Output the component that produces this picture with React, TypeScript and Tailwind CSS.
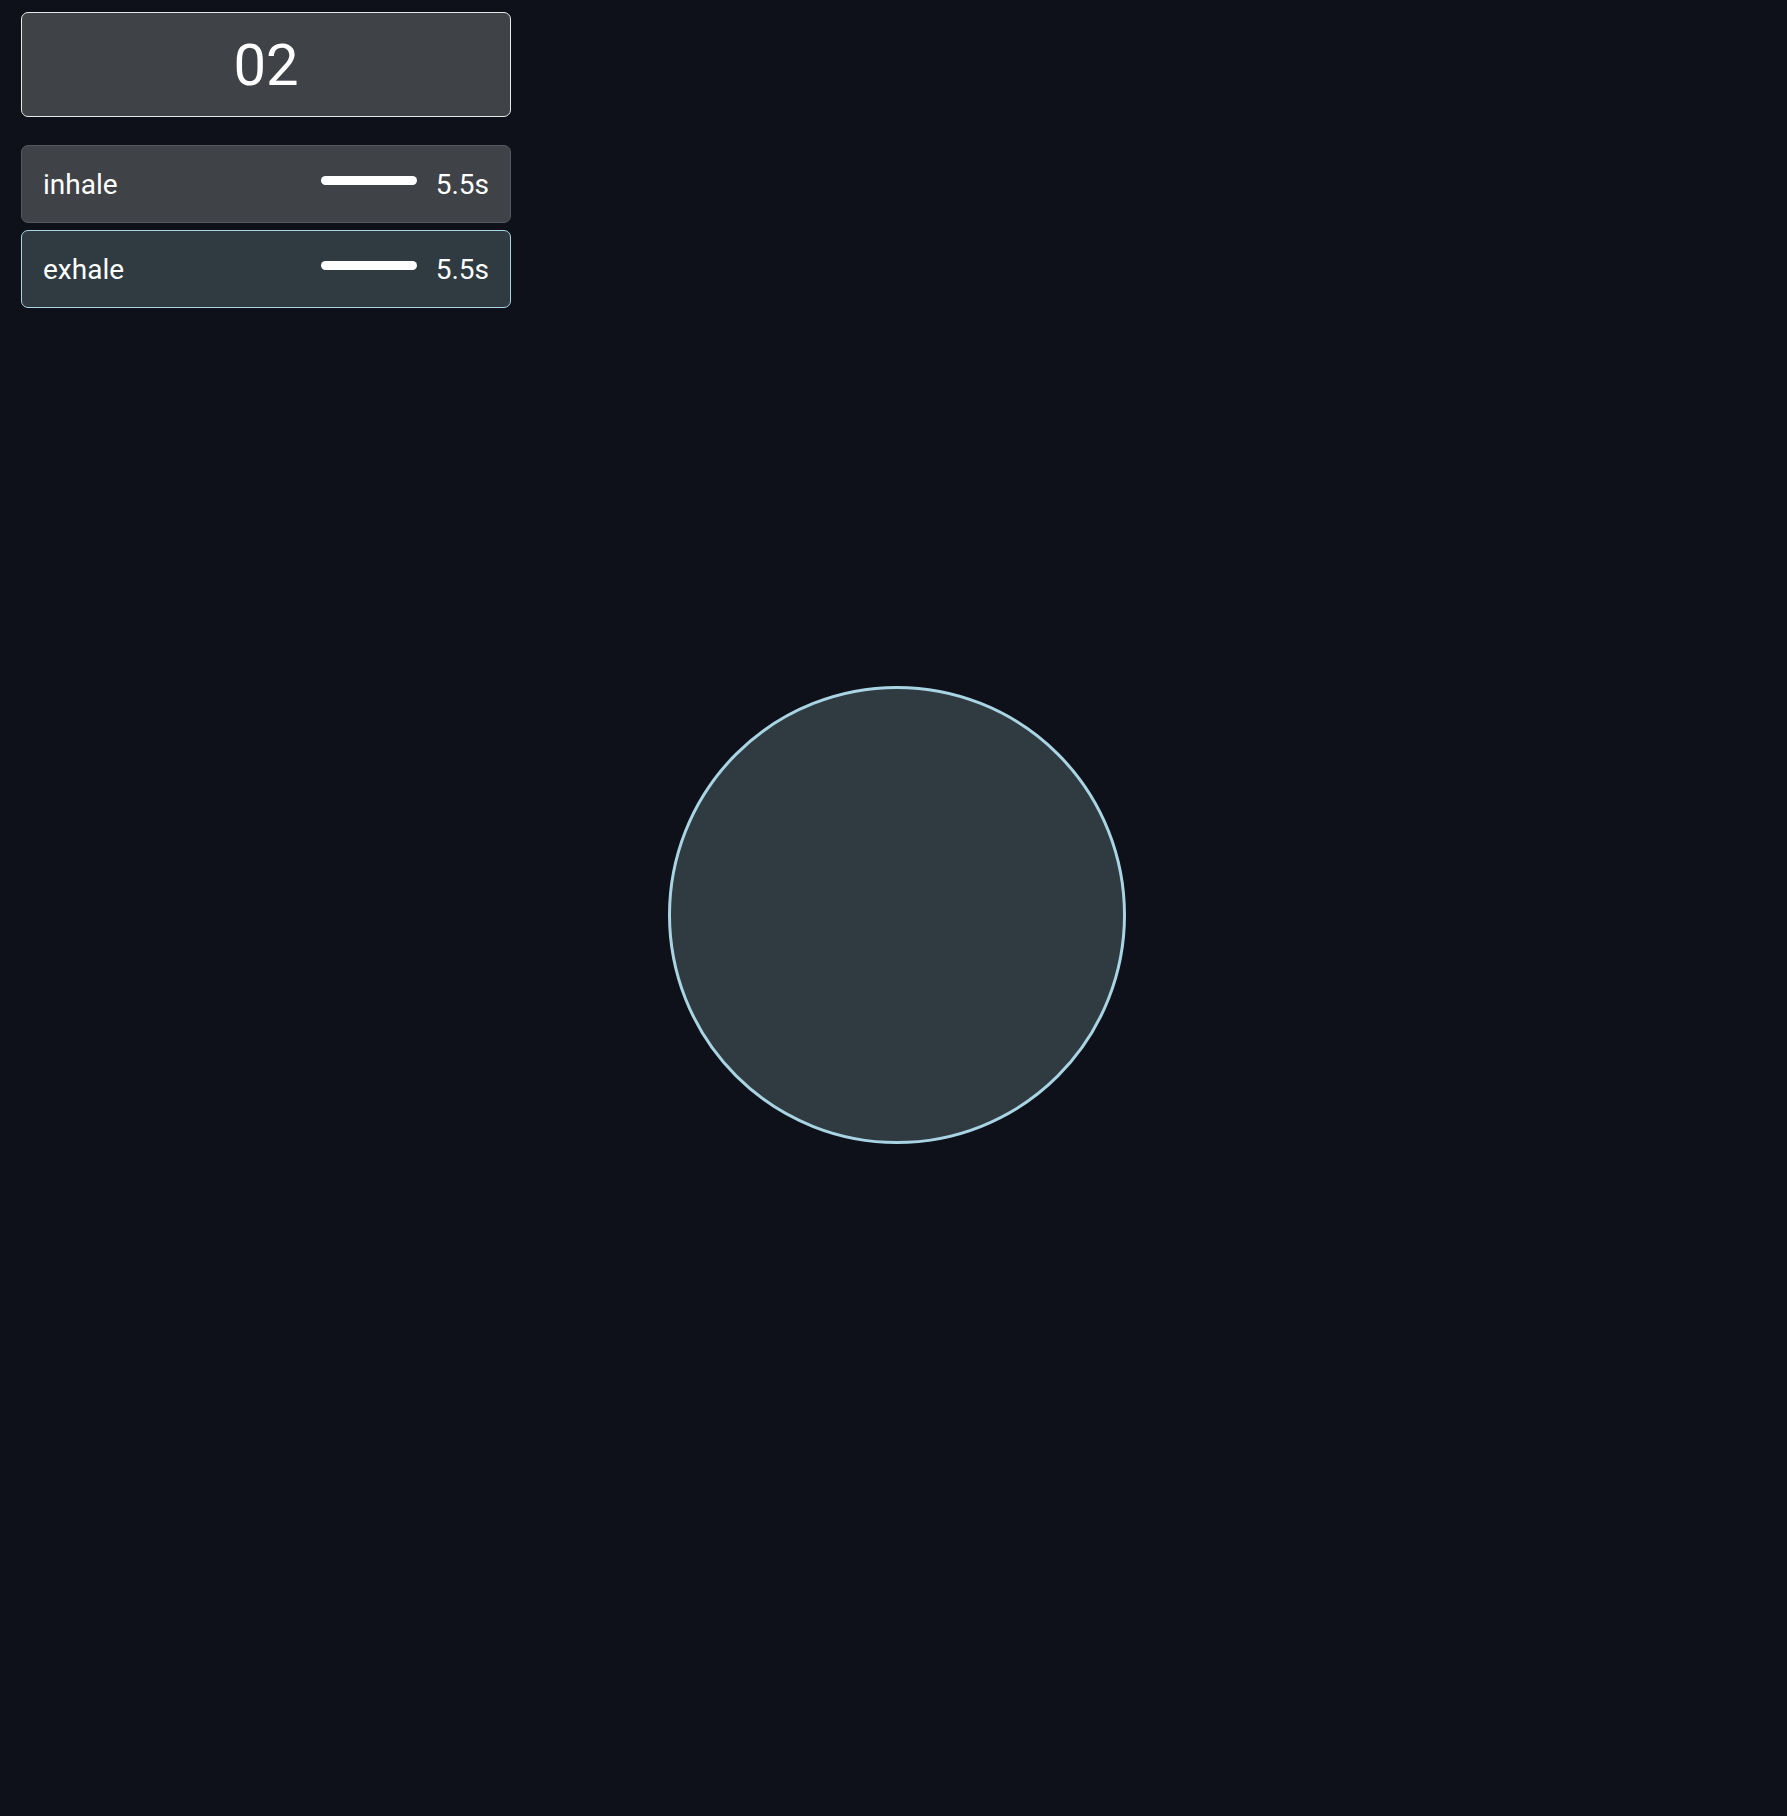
import React from "react";

function Row({ label, active }: { label: string; active?: boolean }) {
  return (
    <div
      className={
        "flex h-[78px] items-center justify-between rounded-[7px] border px-[21px] pt-[2px] " +
        (active ? "border-[#a9d4e3] bg-[#2f3a41]" : "border-[#55585d] bg-[#3f4247]")
      }
    >
      <span className="text-[28px] leading-none text-white">{label}</span>
      <div className="flex items-center gap-[19px]">
        <div className="mb-[9px] h-[9px] w-[96px] rounded-full bg-white" />
        <span className="text-[28px] leading-none text-white">5.5s</span>
      </div>
    </div>
  );
}

export default function App() {
  return (
    <div
      className="relative min-h-screen w-full bg-[#0e1119]"
      style={{ fontFamily: "Roboto, 'Liberation Sans', sans-serif" }}
    >
      <div className="flex min-h-screen items-center justify-center pl-[6px] pt-[14px]">
        <div className="h-[458px] w-[458px] rounded-full border-[3px] border-[#a9d4e3] bg-[#2f3a41]" />
      </div>
      <div className="absolute left-[21px] top-[12px] flex w-[490px] flex-col">
        <div className="flex h-[105px] items-center justify-center rounded-[7px] border border-[#e8e8e8] bg-[#3f4247]">
          <span className="text-[58px] leading-none text-white">02</span>
        </div>
        <div className="mt-[28px] flex flex-col gap-[7px]">
          <Row label="inhale" />
          <Row label="exhale" active />
        </div>
      </div>
    </div>
  );
}
